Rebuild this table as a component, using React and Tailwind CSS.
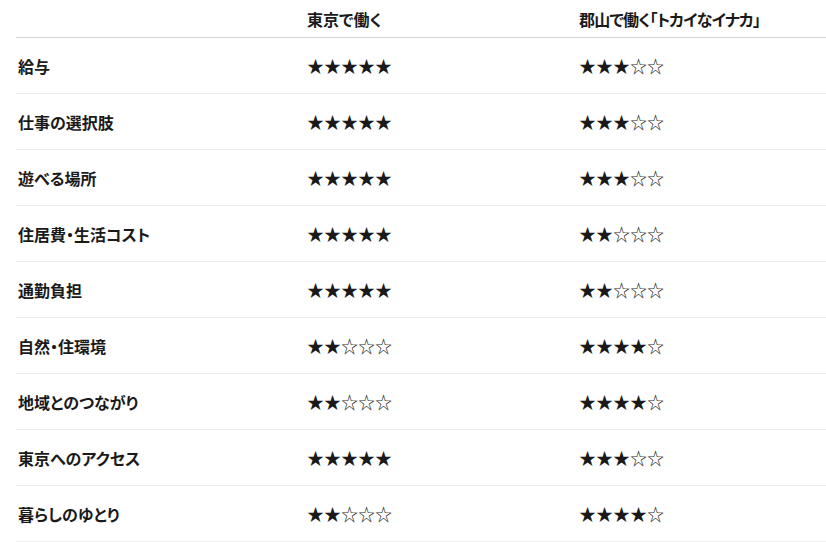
const rows = [
  { label: "給与", tokyo: 5, koriyama: 3 },
  { label: "仕事の選択肢", tokyo: 5, koriyama: 3 },
  { label: "遊べる場所", tokyo: 5, koriyama: 3 },
  { label: "住居費・生活コスト", tokyo: 5, koriyama: 2 },
  { label: "通勤負担", tokyo: 5, koriyama: 2 },
  { label: "自然・住環境", tokyo: 2, koriyama: 4 },
  { label: "地域とのつながり", tokyo: 2, koriyama: 4 },
  { label: "東京へのアクセス", tokyo: 5, koriyama: 3 },
  { label: "暮らしのゆとり", tokyo: 2, koriyama: 4 },
];

const stars = (n) => "★".repeat(n) + "☆".repeat(5 - n);

export default function App() {
  return (
    <div className="w-[826px] h-[542px] bg-white overflow-hidden pl-4 text-[#1a1a1a] font-['Noto_Sans_CJK_JP',sans-serif]">
      {/* header */}
      <div className="grid grid-cols-[291px_272px_1fr] h-[38px] items-center border-b border-[#d4d4d4] text-[16px] font-semibold [font-feature-settings:'palt']">
        <div></div>
        <div>東京で働く</div>
        <div className="tracking-[-0.8px]">郡山で働く「トカイなイナカ」</div>
      </div>

      {rows.map((row) => (
        <div
          key={row.label}
          className="grid grid-cols-[291px_272px_1fr] h-[56px] items-center border-b border-[#ececec]"
        >
          <div className="pl-[2px] text-[16px] font-bold [font-feature-settings:'palt']">{row.label}</div>
          <div className="text-[17px] leading-none">{stars(row.tokyo)}</div>
          <div className="text-[17px] leading-none">{stars(row.koriyama)}</div>
        </div>
      ))}
    </div>
  );
}
